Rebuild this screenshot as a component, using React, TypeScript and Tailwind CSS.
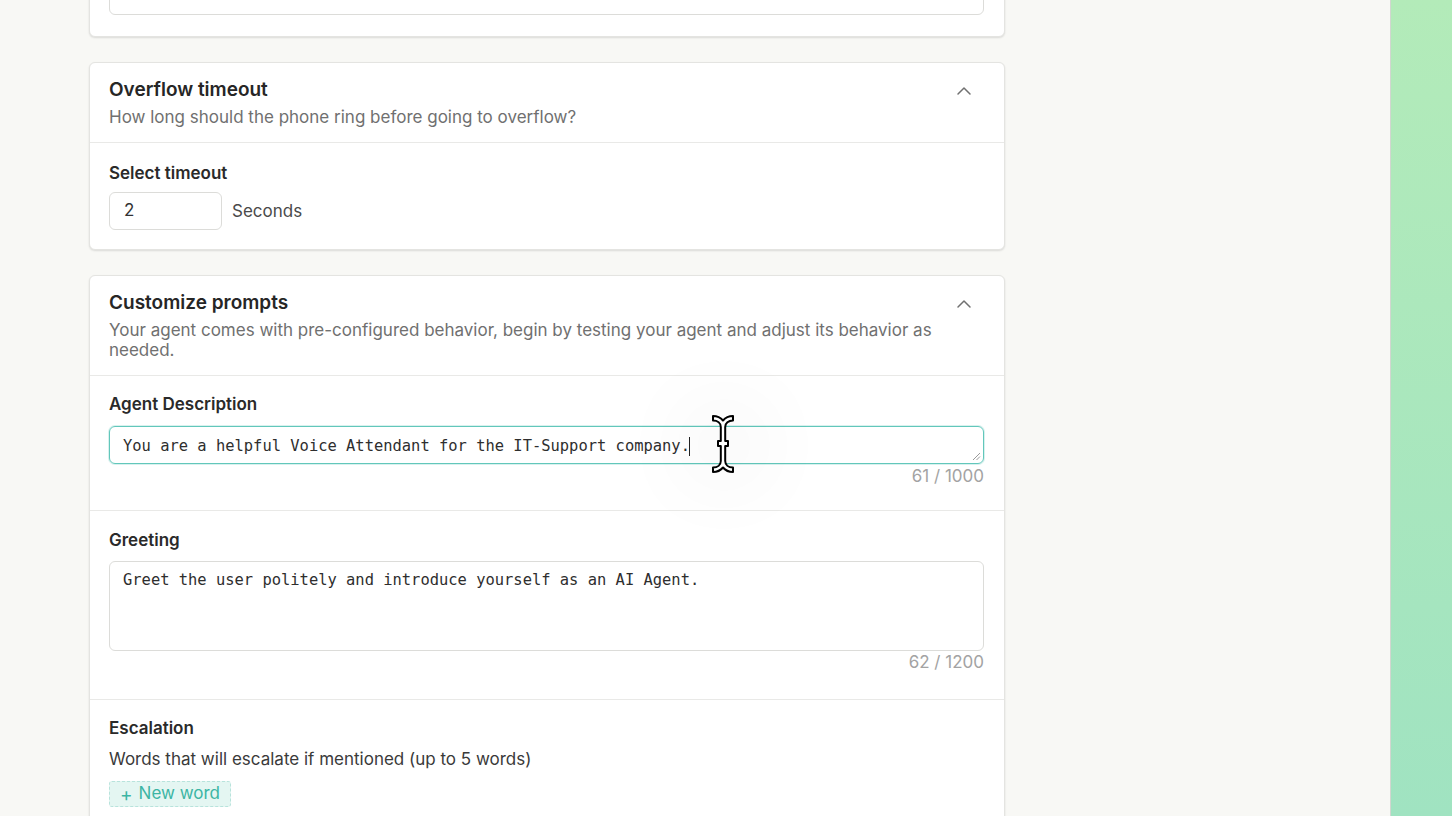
import React from "react";

const font = { fontFamily: "Inter, 'Noto Sans', 'Liberation Sans', sans-serif" };
const mono = { fontFamily: "'DejaVu Sans Mono', 'Liberation Mono', monospace" };

function Chevron() {
  return (
    <svg width="24" height="24" viewBox="0 0 24 24" fill="none" stroke="#707070" strokeWidth="1.5" strokeLinecap="round" strokeLinejoin="round">
      <path d="M6 15l6-6 6 6" />
    </svg>
  );
}

function Card({ children, className = "" }: { children: React.ReactNode; className?: string }) {
  return (
    <div className={"w-[916px] bg-white border border-[#e4e4e1] rounded-[6px] shadow-[0_1px_2px_rgba(0,0,0,0.12)] " + className}>
      {children}
    </div>
  );
}

function Header({ title, desc }: { title: string; desc: React.ReactNode }) {
  return (
    <div className="flex items-start justify-between pl-[19px] pr-[28px] pt-[13px] pb-[15px] border-b border-[#e9e9e7]">
      <div>
        <div className="text-[19px] leading-7 font-semibold text-[#262626]">{title}</div>
        <div className="mt-[3px] text-[17px] leading-5 text-[#707070] w-[840px]">{desc}</div>
      </div>
      <div className="pt-[3px]">
        <Chevron />
      </div>
    </div>
  );
}

function IBeam() {
  return (
    <svg width="24" height="60" viewBox="0 0 24 60">
      <path
        d="M2,2 C6,2 9.5,3.5 12,6.5 C14.5,3.5 18,2 22,2 L22,6.5 C17.5,6.5 14.2,9 14.2,13 L14.2,27 L17,27 L17,32 L14.2,32 L14.2,47 C14.2,51 17.5,53.5 22,53.5 L22,58 C18,58 14.5,56.5 12,53.5 C9.5,56.5 6,58 2,58 L2,53.5 C6.5,53.5 9.8,51 9.8,47 L9.8,32 L7,32 L7,27 L9.8,27 L9.8,13 C9.8,9 6.5,6.5 2,6.5 Z"
        fill="white"
        stroke="black"
        strokeWidth="2"
        strokeLinejoin="round"
      />
    </svg>
  );
}

export default function App() {
  return (
    <div className="w-[1452px] h-[816px] overflow-hidden flex bg-[#f8f8f5]" style={font}>
      <div className="flex-1 pl-[89px] relative">
        <div className="flex flex-col gap-[25px]">
          {/* Card 1 partial */}
          <Card className="-mt-[38px] h-[75px] pl-[19px] pr-[20px] pt-[14px]">
            <div className="h-[38px] border border-[#dcdcd9] rounded-[6px]" />
          </Card>

          {/* Card 2 */}
          <Card>
            <Header title="Overflow timeout" desc="How long should the phone ring before going to overflow?" />
            <div className="pl-[19px] pt-[18px] pb-[19px]">
              <div className="text-[17px] leading-6 font-semibold text-[#2a2a2a]">Select timeout</div>
              <div className="mt-[7px] flex items-center gap-[10px]">
                <div className="w-[113px] h-[38px] border border-[#dcdcd9] rounded-[6px] pl-[14px] flex items-center text-[17px] text-[#333]">2</div>
                <div className="text-[17px] text-[#4a4a4a] pt-[1px]">Seconds</div>
              </div>
            </div>
          </Card>

          {/* Card 3 */}
          <Card>
            <Header
              title="Customize prompts"
              desc="Your agent comes with pre-configured behavior, begin by testing your agent and adjust its behavior as needed."
            />
            <div className="pl-[19px] pr-[20px] pt-[16px] pb-[24px] border-b border-[#e9e9e7]">
              <div className="text-[17px] leading-6 font-semibold text-[#2a2a2a]">Agent Description</div>
              <div className="mt-[10px] relative h-[38px] border-[1.5px] border-[#62c7bb] rounded-[6px] shadow-[0_0_0_1px_rgba(98,199,187,0.25)] pl-[13px] pt-[3px] flex items-center">
                <span className="text-[15.45px] text-[#2e2e2e] whitespace-pre" style={mono}>
                  You are a helpful Voice Attendant for the IT-Support company.
                </span>
                <span className="w-[1.5px] h-[19px] bg-[#222] -ml-[1px]" />
                <svg className="absolute right-[2px] bottom-[2px]" width="9" height="9" viewBox="0 0 9 9" stroke="#9a9a9a" strokeWidth="1">
                  <path d="M1 8 L8 1 M4.5 8 L8 4.5" />
                </svg>
              </div>
              <div className="mt-[2px] text-right text-[17px] leading-5 text-[#a3a3a3]">61 / 1000</div>
            </div>

            <div className="pl-[19px] pr-[20px] pt-[17px] pb-[27px] border-b border-[#e9e9e7]">
              <div className="text-[17px] leading-6 font-semibold text-[#2a2a2a]">Greeting</div>
              <div className="mt-[9px] h-[90px] border border-[#dcdcd9] rounded-[6px] pl-[13px] pt-[5px]">
                <span className="text-[15.45px] leading-6 text-[#2e2e2e] whitespace-pre" style={mono}>
                  Greet the user politely and introduce yourself as an AI Agent.
                </span>
              </div>
              <div className="mt-[1px] text-right text-[17px] leading-5 text-[#a3a3a3]">62 / 1200</div>
            </div>

            <div className="px-[19px] pt-[16px] pb-[30px]">
              <div className="text-[17px] leading-6 font-semibold text-[#2a2a2a]">Escalation</div>
              <div className="mt-[7px] text-[17px] leading-6 text-[#3a3a3a]">Words that will escalate if mentioned (up to 5 words)</div>
              <div className="mt-[10px] inline-flex items-center gap-[6px] h-[26px] px-[10px] border border-dashed border-[#b8e3dc] bg-[#e4f6f2] rounded-[3px] text-[17px] text-[#3cb5a4]">
                <span className="text-[19px] leading-none">+</span>
                <span>New word</span>
              </div>
            </div>
          </Card>
        </div>

        {/* cursor overlay */}
        <div className="absolute left-[724px] top-[445px] w-0 h-0 shadow-[0_0_80px_45px_rgba(0,0,0,0.03)]" />
        <div className="absolute left-[711px] top-[414px]">
          <IBeam />
        </div>
      </div>
      <div className="w-[62px] h-full border-l border-[#d2d6d0] bg-gradient-to-b from-[#b3ebb9] to-[#a0e3c1]" />
    </div>
  );
}
